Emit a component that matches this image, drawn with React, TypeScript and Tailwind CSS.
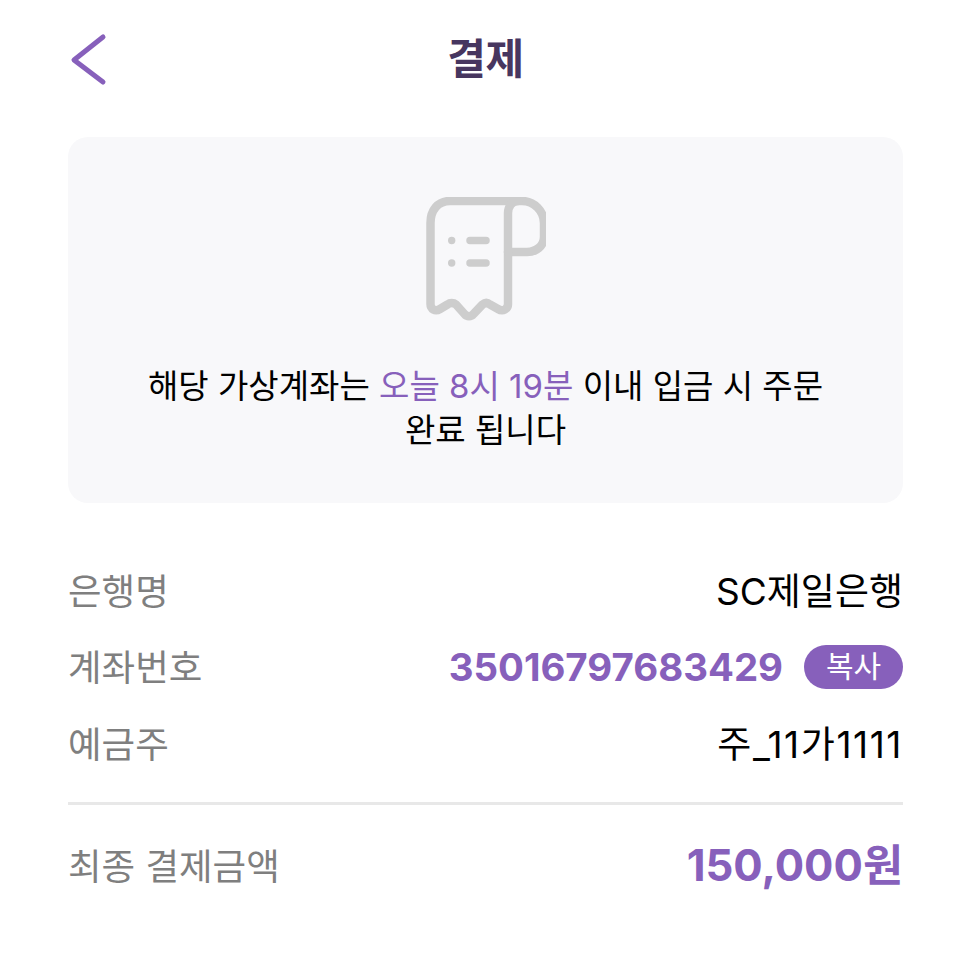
const FONT = "font-['Inter','Noto_Sans_CJK_KR','Noto_Sans',sans-serif]"

function ReceiptIcon() {
  return (
    <svg width="120" height="124" viewBox="0 0 120 124" fill="none" stroke="#cdcdcd" strokeWidth="8.5" strokeLinecap="round" strokeLinejoin="round">
      <path d="M24 4H96C108 4 118 14 118 26V40C118 49 110 55 101 55H82V107C82 112 77 115 72 112L64 107.5C61.5 105.5 59 105.5 56.5 107.5L47.5 117C45 120 41 120 38.5 117L30 107.5C27.5 105.5 24 105.5 21.5 107.5L14 112C9 115 4.5 112 4.5 107V26C4.5 13 12 4 24 4Z" />
      <path d="M82 55V16C82 10 86 4 92 4" />
      <path d="M44 43.5H60M44 66H60" strokeWidth="7.5" />
      <circle cx="25.7" cy="43.5" r="3.7" fill="#cdcdcd" stroke="none" />
      <circle cx="25.7" cy="66" r="3.7" fill="#cdcdcd" stroke="none" />
    </svg>
  )
}

function Row({ label, children }: { label: string; children: React.ReactNode }) {
  return (
    <div className="flex h-[76.5px] items-center justify-between">
      <span className="pt-[4px] text-[36.5px] text-[#7f7f7f]">{label}</span>
      {children}
    </div>
  )
}

export default function App() {
  return (
    <div className={`${FONT} min-h-[967px] bg-white pr-[63px] pl-[68px]`}>
      {/* Header */}
      <div className="flex h-[137px] items-start justify-between pt-[30px]">
        <svg width="40" height="56" viewBox="0 0 40 56" fill="none" stroke="#8760bb" strokeWidth="5" strokeLinecap="round" strokeLinejoin="round">
          <path d="M35 7L6 30L35 52" />
        </svg>
        <h1 className="text-[42px] leading-[58px] font-bold tracking-[-0.5px] text-[#47365f]">결제</h1>
        <div className="w-[40px]" />
      </div>

      {/* Notice */}
      <div className="flex h-[366px] flex-col items-center rounded-[20px] bg-[#f8f8fa] pt-[60px]">
        <ReceiptIcon />
        <p className="mt-[43px] w-[720px] text-center text-[33px] leading-[44px] text-black">
          해당 가상계좌는 <span className="text-[#8760bb]">오늘 8시 19분</span> 이내 입금 시 주문
          <br />
          완료 됩니다
        </p>
      </div>

      {/* Account info */}
      <div className="mt-[49px] border-b-[3px] border-[#e8e8e8] pb-[20px]">
        <Row label="은행명">
          <span className="pt-[2px] text-[37px] text-black">SC제일은행</span>
        </Row>
        <Row label="계좌번호">
          <div className="flex items-center gap-[21px]">
            <span className="pt-[2px] text-[38.4px] font-bold text-[#8760bb]">35016797683429</span>
            <span className="flex h-[44px] w-[99px] items-center justify-center rounded-full bg-[#8760bb] text-[30px] text-white">복사</span>
          </div>
        </Row>
        <Row label="예금주">
          <span className="pt-[2px] text-[37px] tracking-[1.6px] text-black">주_11가1111</span>
        </Row>
      </div>

      {/* Total */}
      <div className="flex h-[122px] items-center justify-between">
        <span className="pt-[4px] text-[36.5px] text-[#7f7f7f]">최종 결제금액</span>
        <span className="text-[43.6px] font-bold text-[#8760bb]">150,000원</span>
      </div>
    </div>
  )
}
